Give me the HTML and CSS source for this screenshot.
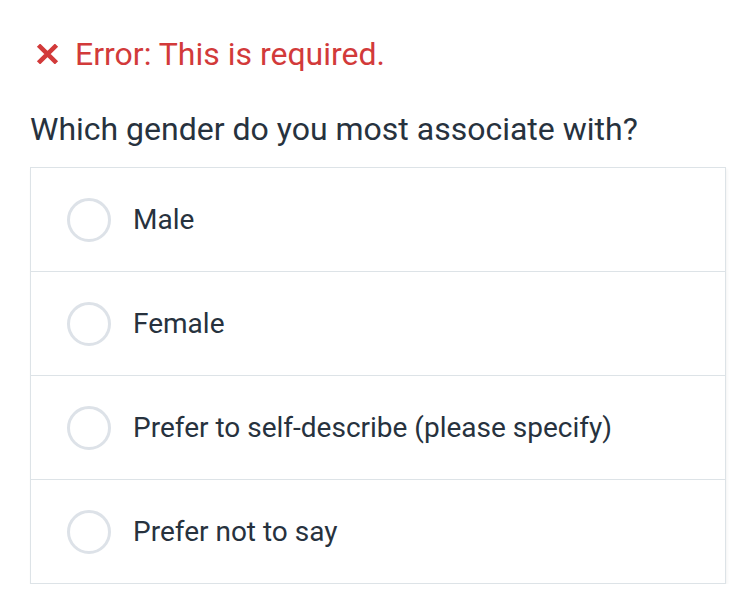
FILE: index.html
```html
<!DOCTYPE html>
<html>
<head>
<meta charset="utf-8">
<link rel="stylesheet" href="styles.css">
</head>
<body>
<div class="page">
  <div class="error">
    <svg class="x-icon" viewBox="0 0 23 20" width="23" height="20"><path d="M2.5 1.2 L20.5 18.8 M20.5 1.2 L2.5 18.8" stroke="#d23a3a" stroke-width="4.6" stroke-linecap="butt"/></svg>
    <span>Error: This is required.</span>
  </div>
  <div class="question">Which gender do you most associate with?</div>
  <div class="options">
    <label class="option"><span class="radio"></span><span class="label">Male</span></label>
    <label class="option"><span class="radio"></span><span class="label">Female</span></label>
    <label class="option"><span class="radio"></span><span class="label">Prefer to self-describe (please specify)</span></label>
    <label class="option"><span class="radio"></span><span class="label">Prefer not to say</span></label>
  </div>
</div>
</body>
</html>
```
FILE: styles.css
```css
html, body {
  margin: 0;
  padding: 0;
  background: #ffffff;
}
.page {
  padding: 30px 23px 0 30px;
  font-family: Roboto, "Liberation Sans", sans-serif;
}
.error {
  display: flex;
  align-items: center;
  gap: 16px;
  color: #d23a3a;
  font-size: 32px;
  height: 48px;
  padding-left: 6px;
}
.x-icon {
  flex: none;
}
.question {
  margin-top: 31px;
  font-size: 32px;
  color: #27323e;
  line-height: 40px;
}
.options {
  margin-top: 18px;
  border: 1px solid #dde3e7;
  box-shadow: 1px 2px 3px rgba(0,0,0,0.05);
}
.option {
  display: flex;
  align-items: center;
  height: 103px;
  border-top: 1px solid #dde3e7;
  padding-left: 36px;
}
.option:first-child {
  border-top: none;
}
.radio {
  width: 38px;
  height: 38px;
  border: 3px solid #dde2e8;
  border-radius: 50%;
  flex: none;
}
.label {
  margin-left: 22px;
  font-size: 28px;
  color: #27323e;
}
```
